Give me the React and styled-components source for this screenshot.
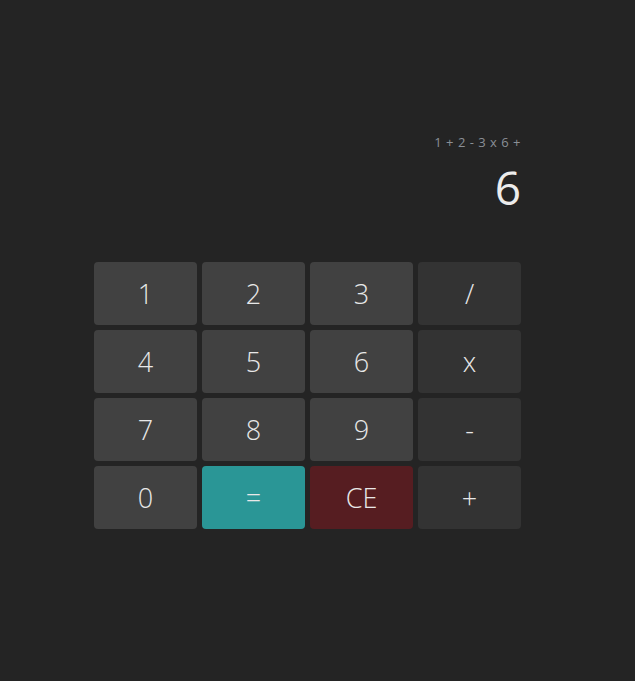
import React from "react";
import styled, { createGlobalStyle } from "styled-components";

const GlobalStyle = createGlobalStyle`
    html, body {
        margin: 0;
        padding: 0;
        background: #242424;
    }
    body {
        font-family: "Open Sans", "Noto Sans", sans-serif;
        color: #e6e6e6;
    }
`;

const Page = styled.div`
    width: 635px;
    height: 681px;
    box-sizing: border-box;
    padding: 133px 0 0 94px;
`;

const Calculator = styled.div`
    width: 427px;
    display: flex;
    flex-direction: column;
`;

const Display = styled.div`
    display: flex;
    flex-direction: column;
    align-items: flex-end;
    height: 129px;
`;

const Expression = styled.div`
    font-size: 13px;
    line-height: 18px;
    color: #8a8f96;
    letter-spacing: 0.5px;
`;

const Result = styled.div`
    font-size: 46px;
    font-weight: 400;
    line-height: 56px;
    margin-top: 8px;
    color: #ececec;
`;

const Keypad = styled.div`
    display: grid;
    grid-template-columns: repeat(4, 103px);
    grid-auto-rows: 63px;
    gap: 5px;
`;

const colors = {
    digit: "#414141",
    op: "#333333",
    equals: "#2a9696",
    clear: "#561d21",
};

const Key = styled.button`
    border: none;
    border-radius: 4px;
    background: ${(p) => colors[p.$kind]};
    color: #e8e8e8;
    font-family: "Open Sans", "Noto Sans", sans-serif;
    font-weight: 300;
    font-size: 27px;
    padding: 0;
    cursor: pointer;
`;

const keys = [
    ["1", "digit"], ["2", "digit"], ["3", "digit"], ["/", "op"],
    ["4", "digit"], ["5", "digit"], ["6", "digit"], ["x", "op"],
    ["7", "digit"], ["8", "digit"], ["9", "digit"], ["-", "op"],
    ["0", "digit"], ["=", "equals"], ["CE", "clear"], ["+", "op"],
];

const App = () => {
    return (
        <Page>
            <GlobalStyle />
            <Calculator>
                <Display>
                    <Expression>1 + 2 - 3 x 6 +</Expression>
                    <Result>6</Result>
                </Display>
                <Keypad>
                    {keys.map(([label, kind]) => (
                        <Key key={label} $kind={kind}>{label}</Key>
                    ))}
                </Keypad>
            </Calculator>
        </Page>
    );
};

export default App;
